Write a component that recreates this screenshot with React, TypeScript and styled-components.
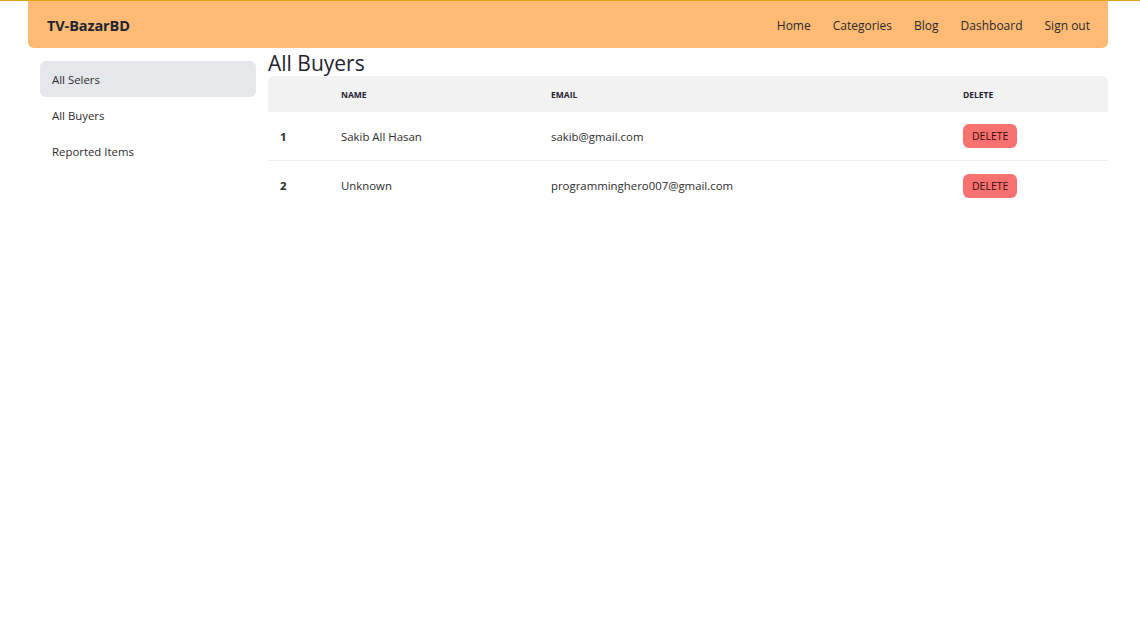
import React from "react";
import styled, { createGlobalStyle } from "styled-components";

const Global = createGlobalStyle`
  html, body { margin: 0; padding: 0; background: #fff; }
  body {
    font-family: "Open Sans", "Noto Sans", sans-serif;
    color: #1f2937;
    border-top: 1px solid #dfa412;
  }
  * { box-sizing: border-box; }
`;

const Page = styled.div`
  width: 1080px;
  margin-left: 28px;
`;

const Navbar = styled.nav`
  height: 47px;
  background: #fdba74;
  border-radius: 0 0 6px 6px;
  display: flex;
  align-items: center;
  justify-content: space-between;
  padding: 2px 18px 0 19px;
`;

const Brand = styled.div`
  font-size: 14.5px;
  font-weight: 700;
  color: #1f2430;
  letter-spacing: -0.1px;
`;

const NavLinks = styled.div`
  display: flex;
  gap: 22px;
`;

const NavLink = styled.a`
  font-size: 12px;
  color: #2a2a2a;
  text-decoration: none;
`;

const Body = styled.div`
  display: grid;
  grid-template-columns: 216px 1fr;
  column-gap: 12px;
  padding-left: 12px;
`;

const Sidebar = styled.ul`
  list-style: none;
  margin: 13px 0 0;
  padding: 0;
  display: flex;
  flex-direction: column;
`;

const SideItem = styled.li<{ $active?: boolean }>`
  height: 36px;
  display: flex;
  align-items: center;
  padding-left: 12px;
  font-size: 11.4px;
  color: #2d2d2d;
  border-radius: 6px;
  background: ${(p) => (p.$active ? "#e5e7eb" : "transparent")};
`;

const Main = styled.main`
  display: flex;
  flex-direction: column;
`;

const Title = styled.h1`
  margin: 2px 0 0;
  font-size: 21px;
  font-weight: 400;
  line-height: 26px;
  color: #1f2430;
`;

const Table = styled.table`
  width: 100%;
  border-collapse: separate;
  border-spacing: 0;
`;

const Th = styled.th<{ $w?: string }>`
  background: #f2f2f2;
  height: 36px;
  text-align: left;
  font-size: 8.5px;
  font-weight: 700;
  text-transform: uppercase;
  color: #1f2430;
  padding: 0 12px;
  width: ${(p) => p.$w || "auto"};
  &:first-child { border-top-left-radius: 6px; }
  &:last-child { border-top-right-radius: 6px; }
`;

const Td = styled.td<{ $bold?: boolean; $last?: boolean }>`
  height: 49px;
  padding: 0 12px;
  font-size: 11.4px;
  color: #2d2d2d;
  font-weight: ${(p) => (p.$bold ? 700 : 400)};
  border-bottom: ${(p) => (p.$last ? "none" : "1px solid #ececec")};
`;

const DeleteButton = styled.button`
  height: 24px;
  padding: 0 9px;
  background: #f87171;
  border: none;
  border-radius: 6px;
  font-family: inherit;
  font-size: 10.5px;
  color: #3a0b0b;
  cursor: pointer;
`;

const buyers = [
  { name: "Sakib All Hasan", email: "sakib@gmail.com" },
  { name: "Unknown", email: "programminghero007@gmail.com" },
];

export default function App() {
  return (
    <>
      <Global />
      <Page>
        <Navbar>
          <Brand>TV-BazarBD</Brand>
          <NavLinks>
            {["Home", "Categories", "Blog", "Dashboard", "Sign out"].map((l) => (
              <NavLink key={l}>{l}</NavLink>
            ))}
          </NavLinks>
        </Navbar>
        <Body>
          <Sidebar>
            <SideItem $active>All Selers</SideItem>
            <SideItem>All Buyers</SideItem>
            <SideItem>Reported Items</SideItem>
          </Sidebar>
          <Main>
            <Title>All Buyers</Title>
            <Table>
              <thead>
                <tr>
                  <Th $w="61px"></Th>
                  <Th $w="210px">Name</Th>
                  <Th $w="412px">Email</Th>
                  <Th>Delete</Th>
                </tr>
              </thead>
              <tbody>
                {buyers.map((b, i) => (
                  <tr key={b.email}>
                    <Td $bold $last={i === buyers.length - 1}>{i + 1}</Td>
                    <Td $last={i === buyers.length - 1}>{b.name}</Td>
                    <Td $last={i === buyers.length - 1}>{b.email}</Td>
                    <Td $last={i === buyers.length - 1}>
                      <DeleteButton>DELETE</DeleteButton>
                    </Td>
                  </tr>
                ))}
              </tbody>
            </Table>
          </Main>
        </Body>
      </Page>
    </>
  );
}
